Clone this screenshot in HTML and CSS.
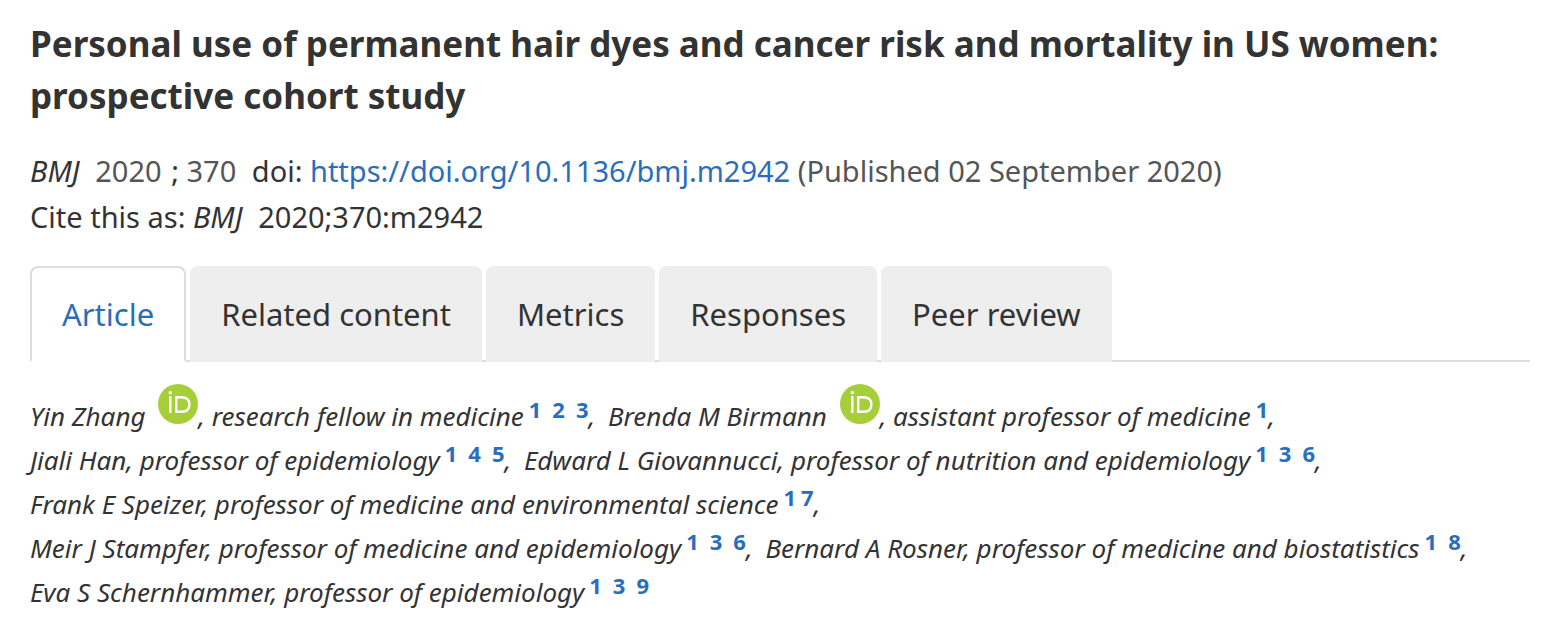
FILE: index.html
```html
<!DOCTYPE html>
<html lang="en">
<head>
    <meta charset="UTF-8">
    <meta name="viewport" content="width=device-width, initial-scale=1.0">
    <title>Personal use of permanent hair dyes and cancer risk</title>
    <link rel="stylesheet" href="styles.css">
</head>
<body>
    <svg class="sprite" aria-hidden="true">
        <symbol id="orcid" viewBox="0 0 40 40">
            <circle cx="20" cy="20" r="20" fill="#a6ce39"/>
            <circle cx="12.3" cy="8.8" r="1.7" fill="#fff"/>
            <path d="M12.3 12V29M18.2 13.2V27.8H23.4Q31.4 27.8 31.4 20.5T23.4 13.2Z" fill="none" stroke="#fff" stroke-width="2.4"/>
        </symbol>
    </svg>

    <main class="article">
        <h1 class="title">Personal use of permanent hair dyes and cancer risk and mortality in US women: prospective cohort study</h1>

        <div class="citation">
            <p><em class="journal">BMJ</em> <span class="muted year">2020</span> ; <span class="muted volume">370</span> doi: <a href="#">https://doi.org/10.1136/bmj.m2942</a> <span class="muted">(Published 02 September 2020)</span></p>
            <p>Cite this as: <em class="journal">BMJ</em> 2020;370:m2942</p>
        </div>

        <nav class="tabs">
            <a class="tab active" href="#">Article</a>
            <a class="tab" href="#">Related content</a>
            <a class="tab" href="#">Metrics</a>
            <a class="tab" href="#">Responses</a>
            <a class="tab" href="#">Peer review</a>
        </nav>

        <ol class="authors">
            <li>Yin Zhang <svg class="orcid" role="img" aria-label="ORCID"><use href="#orcid"/></svg>, research fellow in medicine<sup><a href="#">1</a><a href="#">2</a><a href="#">3</a></sup>,</li>
            <li>Brenda M Birmann <svg class="orcid" role="img" aria-label="ORCID"><use href="#orcid"/></svg>, assistant professor of medicine<sup><a href="#">1</a></sup>,</li>
            <li>Jiali Han, professor of epidemiology<sup><a href="#">1</a><a href="#">4</a><a href="#">5</a></sup>,</li>
            <li>Edward L Giovannucci, professor of nutrition and epidemiology<sup><a href="#">1</a><a href="#">3</a><a href="#">6</a></sup>,</li>
            <li>Frank E Speizer, professor of medicine and environmental science<sup class="tight"><a href="#">1</a><a href="#">7</a></sup>,</li>
            <li>Meir J Stampfer, professor of medicine and epidemiology<sup><a href="#">1</a><a href="#">3</a><a href="#">6</a></sup>,</li>
            <li>Bernard A Rosner, professor of medicine and biostatistics<sup><a href="#">1</a><a href="#">8</a></sup>,</li>
            <li>Eva S Schernhammer, professor of epidemiology<sup><a href="#">1</a><a href="#">3</a><a href="#">9</a></sup></li>
        </ol>
    </main>
</body>
</html>
```

FILE: styles.css
```css
body {
    margin: 0;
    background: #fff;
    color: #333;
    font-family: "Noto Sans", "Open Sans", sans-serif;
}

a {
    color: #2a6ebb;
    text-decoration: none;
}

.sprite {
    display: none;
}

.article {
    padding: 18px 18px 0 30px;
}

.title {
    margin: 0 0 26px;
    font-size: 35px;
    line-height: 52px;
}

.citation {
    margin-bottom: 26px;
    font-size: 29px;
    line-height: 46px;
}

.citation p {
    margin: 0;
}

.journal,
.volume {
    margin-right: 8px;
}

.year {
    margin-right: 2px;
}

.muted {
    color: #555;
}

.tabs {
    display: flex;
    gap: 4px;
    box-shadow: inset 0 -2px #ddd;
}

.tab {
    padding: 24px 31px;
    border-radius: 8px 8px 0 0;
    background: #eee;
    color: #333;
    font-size: 31px;
    line-height: 48px;
}

.tab.active {
    padding: 22px 30px;
    border: 2px solid #ddd;
    border-bottom-color: #fff;
    background: #fff;
    color: #2a6ebb;
}

.authors {
    margin: 0;
    padding: 32px 0 0;
    font-size: 26px;
    font-style: italic;
    line-height: 44px;
    list-style: none;
}

.authors li {
    display: inline-block;
    margin-right: 6px;
}

.authors sup {
    margin-left: 5px;
    font-size: 22px;
    font-style: normal;
    font-weight: bold;
    line-height: 0;
    vertical-align: 8px;
}

.authors sup a + a {
    margin-left: 11px;
}

.authors .tight a + a {
    margin-left: 5px;
}

.orcid {
    width: 40px;
    height: 40px;
    margin: -12px 0 0 6px;
    vertical-align: 2px;
}
```
